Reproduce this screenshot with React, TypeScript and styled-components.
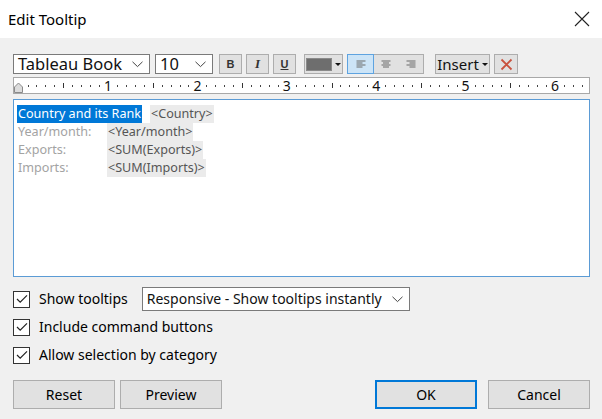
import React from "react";
import styled, { createGlobalStyle } from "styled-components";

const Global = createGlobalStyle`
  html, body { margin: 0; padding: 0; background: #f0f0f0; }
  body { font-family: "Noto Sans", "Liberation Sans", sans-serif; }
  * { box-sizing: border-box; }
`;

const Dialog = styled.div`
  width: 602px;
  height: 419px;
  display: flex;
  flex-direction: column;
  background: #f0f0f0;
  overflow: hidden;
`;

const TitleBar = styled.div`
  height: 38px;
  background: #ffffff;
  display: flex;
  align-items: center;
  justify-content: space-between;
  padding: 0 11px 0 8px;
`;

const Title = styled.div`
  font-size: 15px;
  color: #000;
  margin-top: -1px;
`;

const CloseBtn = styled.div`
  width: 18px;
  height: 18px;
  display: flex;
  align-items: center;
  justify-content: center;
`;

const Body = styled.div`
  flex: 1;
  display: flex;
  flex-direction: column;
  padding: 16px 12px 0 13px;
`;

const Toolbar = styled.div`
  display: flex;
  align-items: center;
  height: 20px;
  flex-shrink: 0;
`;

const Select = styled.div<{ $w: number; $size?: number; $h?: number; $ml?: number }>`
  width: ${(p) => p.$w}px;
  height: ${(p) => p.$h ?? 20}px;
  margin-left: ${(p) => p.$ml ?? 0}px;
  background: #fff;
  border: 1px solid #7a7a7a;
  display: flex;
  align-items: center;
  justify-content: space-between;
  padding: 0 6px 0 4px;
  font-size: ${(p) => p.$size ?? 16}px;
  line-height: 1;
  color: #111;
  white-space: nowrap;
  flex-shrink: 0;
`;

const Chevron = () => (
  <svg width="11" height="7" viewBox="0 0 11 7">
    <path d="M0.5 0.8 L5.5 5.6 L10.5 0.8" fill="none" stroke="#444" strokeWidth="1" />
  </svg>
);

const ToolBtn = styled.div<{ $w: number; $ml: number; $active?: boolean }>`
  width: ${(p) => p.$w}px;
  height: 20px;
  margin-left: ${(p) => p.$ml}px;
  background: ${(p) => (p.$active ? "#cce4f7" : "#e1e1e1")};
  border: 1px solid ${(p) => (p.$active ? "#5ea3e0" : "#adadad")};
  display: flex;
  align-items: center;
  justify-content: center;
  flex-shrink: 0;
  font-size: 11px;
  color: #222;
`;

const Letter = styled.span<{ $kind: "b" | "i" | "u" }>`
  font-family: ${(p) => (p.$kind === "i" ? '"Liberation Serif", serif' : '"Liberation Sans", sans-serif')};
  font-weight: bold;
  font-style: ${(p) => (p.$kind === "i" ? "italic" : "normal")};
  font-size: ${(p) => (p.$kind === "i" ? 13 : 11)}px;
  text-decoration: ${(p) => (p.$kind === "u" ? "underline" : "none")};
  color: #333;
`;

const Swatch = styled.div`
  width: 26px;
  height: 13px;
  background: #6e6e6e;
  border: 1px solid #8a8a8a;
  margin-right: 3px;
`;

const TriDown = styled.span`
  width: 0;
  height: 0;
  border-left: 3px solid transparent;
  border-right: 3px solid transparent;
  border-top: 3px solid #111;
`;

const AlignGroup = styled.div`
  display: flex;
  margin-left: 4px;
  border: 1px solid #adadad;
  background: #e1e1e1;
  height: 20px;
`;

const AlignBtn = styled.div<{ $active?: boolean }>`
  width: 25px;
  height: 18px;
  background: ${(p) => (p.$active ? "#cce4f7" : "transparent")};
  outline: ${(p) => (p.$active ? "1px solid #5ea3e0" : "none")};
  display: flex;
  align-items: center;
  justify-content: center;
`;

const InsertText = styled.span`
  font-size: 15px;
  color: #111;
  margin-right: 3px;
  margin-top: -1px;
`;

const AlignIcon = ({ mode }: { mode: "l" | "c" | "r" }) => {
  const rows = [
    [9, 0],
    [6, 1],
    [9, 2],
    [6, 3],
  ];
  return (
    <svg width="10" height="9" viewBox="0 0 10 9">
      {rows.map(([w, i]) => {
        const x = mode === "l" ? 0.5 : mode === "r" ? 9.5 - w : (10 - w) / 2;
        return <rect key={i} x={x} y={i * 2 + 0.5} width={w} height={1} fill="#6a6a6a" />;
      })}
    </svg>
  );
};

const RulerBox = styled.div`
  margin-top: 3px;
  height: 17px;
  background: #fff;
  border: 1px solid #a8a8a8;
  position: relative;
  flex-shrink: 0;
`;

const RulerSvg = styled.svg`
  display: block;
  overflow: visible;
`;

const Thumb = styled.svg`
  position: absolute;
  left: -1px;
  bottom: 0px;
`;

const Ruler = () => {
  const zero = 4.6;
  const inch = 89.4;
  const marks: React.ReactNode[] = [];
  for (let i = 1; i < 64; i++) {
    const x = zero + (i * inch) / 10;
    if (x > 574) break;
    if (i % 10 === 0) {
      marks.push(
        <text key={i} x={x} y={12.5} fontSize="14" textAnchor="middle" fill="#111" fontFamily="Noto Sans, sans-serif">
          {i / 10}
        </text>
      );
    } else if (i % 5 === 0) {
      marks.push(<rect key={i} x={Math.round(x)} y={5} width={1} height={5} fill="#333" />);
    } else {
      marks.push(<rect key={i} x={Math.round(x)} y={7} width={1} height={2} fill="#444" />);
    }
  }
  return (
    <RulerBox>
      <RulerSvg width="575" height="15" viewBox="0 0 575 15">
        {marks}
      </RulerSvg>
      <Thumb width="11" height="11" viewBox="0 0 11 11">
        <path d="M1.5 10.5 L1.5 5 L5.5 1 L9.5 5 L9.5 10.5 Z" fill="#dcdcdc" stroke="#8a8a8a" strokeWidth="1" />
      </Thumb>
    </RulerBox>
  );
};

const Editor = styled.div`
  margin-top: 5px;
  height: 178px;
  background: #fff;
  border: 1px solid #5b9bd5;
  padding: 5px 0 0 3px;
  font-family: "Noto Sans", sans-serif;
  font-size: 12.6px;
  flex-shrink: 0;
`;

const Line = styled.div`
  display: flex;
  height: 18px;
  line-height: 18px;
  white-space: nowrap;
`;

const Selected = styled.span`
  background: #0078d7;
  color: #fff;
  padding: 0 1px 0 1px;
`;

const Label = styled.span`
  width: 90px;
  padding-left: 1px;
  color: #a3a3a3;
`;

const Field = styled.span<{ $ml?: number }>`
  background: #ebebeb;
  color: #555;
  margin-left: ${(p) => p.$ml ?? 0}px;
  padding: 0 1px 0 1px;
`;

const Options = styled.div`
  margin-top: 10px;
  display: flex;
  flex-direction: column;
  gap: 4px;
`;

const OptRow = styled.div`
  display: flex;
  align-items: center;
  height: 24px;
  font-size: 14px;
  color: #000;
`;

const Box = styled.div`
  width: 17px;
  height: 17px;
  background: #fff;
  border: 1px solid #333;
  display: flex;
  align-items: center;
  justify-content: center;
  margin: 0 9px 0 0;
  flex-shrink: 0;
`;

const Check = () => (
  <svg width="12" height="10" viewBox="0 0 12 10">
    <path d="M1 5 L4.2 8.2 L11 1.3" fill="none" stroke="#222" strokeWidth="1.2" />
  </svg>
);

const OptLabel = styled.span`
  margin-top: -1px;
`;

const Footer = styled.div`
  margin-top: 13px;
  display: flex;
  align-items: center;
  gap: 5px;
`;

const Button = styled.div<{ $primary?: boolean; $push?: boolean; $ml?: number }>`
  width: 102px;
  height: 29px;
  background: #e1e1e1;
  border: 1px solid ${(p) => (p.$primary ? "#0078d7" : "#adadad")};
  box-shadow: ${(p) => (p.$primary ? "inset 0 0 0 1px #0078d7" : "none")};
  display: flex;
  align-items: center;
  justify-content: center;
  font-size: 14px;
  color: #000;
  margin-left: ${(p) => (p.$push ? "auto" : `${p.$ml ?? 0}px`)};
  flex-shrink: 0;
`;

export default function App() {
  return (
    <>
      <Global />
      <Dialog>
        <TitleBar>
          <Title>Edit Tooltip</Title>
          <CloseBtn>
            <svg width="16" height="16" viewBox="0 0 16 16">
              <path d="M1 1 L15 15 M15 1 L1 15" stroke="#222" strokeWidth="1.1" />
            </svg>
          </CloseBtn>
        </TitleBar>
        <Body>
          <Toolbar>
            <Select $w={137} $size={16.5}>
              <span>Tableau Book</span>
              <Chevron />
            </Select>
            <Select $w={58} $size={16.5} $ml={5}>
              <span>10</span>
              <Chevron />
            </Select>
            <ToolBtn $w={23} $ml={6}>
              <Letter $kind="b">B</Letter>
            </ToolBtn>
            <ToolBtn $w={23} $ml={4}>
              <Letter $kind="i">I</Letter>
            </ToolBtn>
            <ToolBtn $w={23} $ml={4}>
              <Letter $kind="u">U</Letter>
            </ToolBtn>
            <ToolBtn $w={39} $ml={8}>
              <Swatch />
              <TriDown />
            </ToolBtn>
            <AlignGroup>
              <AlignBtn $active>
                <AlignIcon mode="l" />
              </AlignBtn>
              <AlignBtn>
                <AlignIcon mode="c" />
              </AlignBtn>
              <AlignBtn>
                <AlignIcon mode="r" />
              </AlignBtn>
            </AlignGroup>
            <ToolBtn $w={55} $ml={11}>
              <InsertText>Insert</InsertText>
              <TriDown />
            </ToolBtn>
            <ToolBtn $w={24} $ml={4}>
              <svg width="13" height="13" viewBox="0 0 13 13">
                <path d="M1.5 1.5 L11.5 11.5 M11.5 1.5 L1.5 11.5" stroke="#c9523e" strokeWidth="1.8" />
              </svg>
            </ToolBtn>
          </Toolbar>
          <Ruler />
          <Editor>
            <Line>
              <Selected>Country and its Rank</Selected>
              <Field $ml={8}>&lt;Country&gt;</Field>
            </Line>
            <Line>
              <Label>Year/month:</Label>
              <Field>&lt;Year/month&gt;</Field>
            </Line>
            <Line>
              <Label>Exports:</Label>
              <Field>&lt;SUM(Exports)&gt;</Field>
            </Line>
            <Line>
              <Label>Imports:</Label>
              <Field>&lt;SUM(Imports)&gt;</Field>
            </Line>
          </Editor>
          <Options>
            <OptRow>
              <Box>
                <Check />
              </Box>
              <OptLabel>Show tooltips</OptLabel>
              <Select $w={268} $size={14} $h={24} $ml={14}>
                <span>Responsive - Show tooltips instantly</span>
                <Chevron />
              </Select>
            </OptRow>
            <OptRow>
              <Box>
                <Check />
              </Box>
              <OptLabel>Include command buttons</OptLabel>
            </OptRow>
            <OptRow>
              <Box>
                <Check />
              </Box>
              <OptLabel>Allow selection by category</OptLabel>
            </OptRow>
          </Options>
          <Footer>
            <Button>Reset</Button>
            <Button>Preview</Button>
            <Button $primary $push>
              OK
            </Button>
            <Button $ml={6}>Cancel</Button>
          </Footer>
        </Body>
      </Dialog>
    </>
  );
}
